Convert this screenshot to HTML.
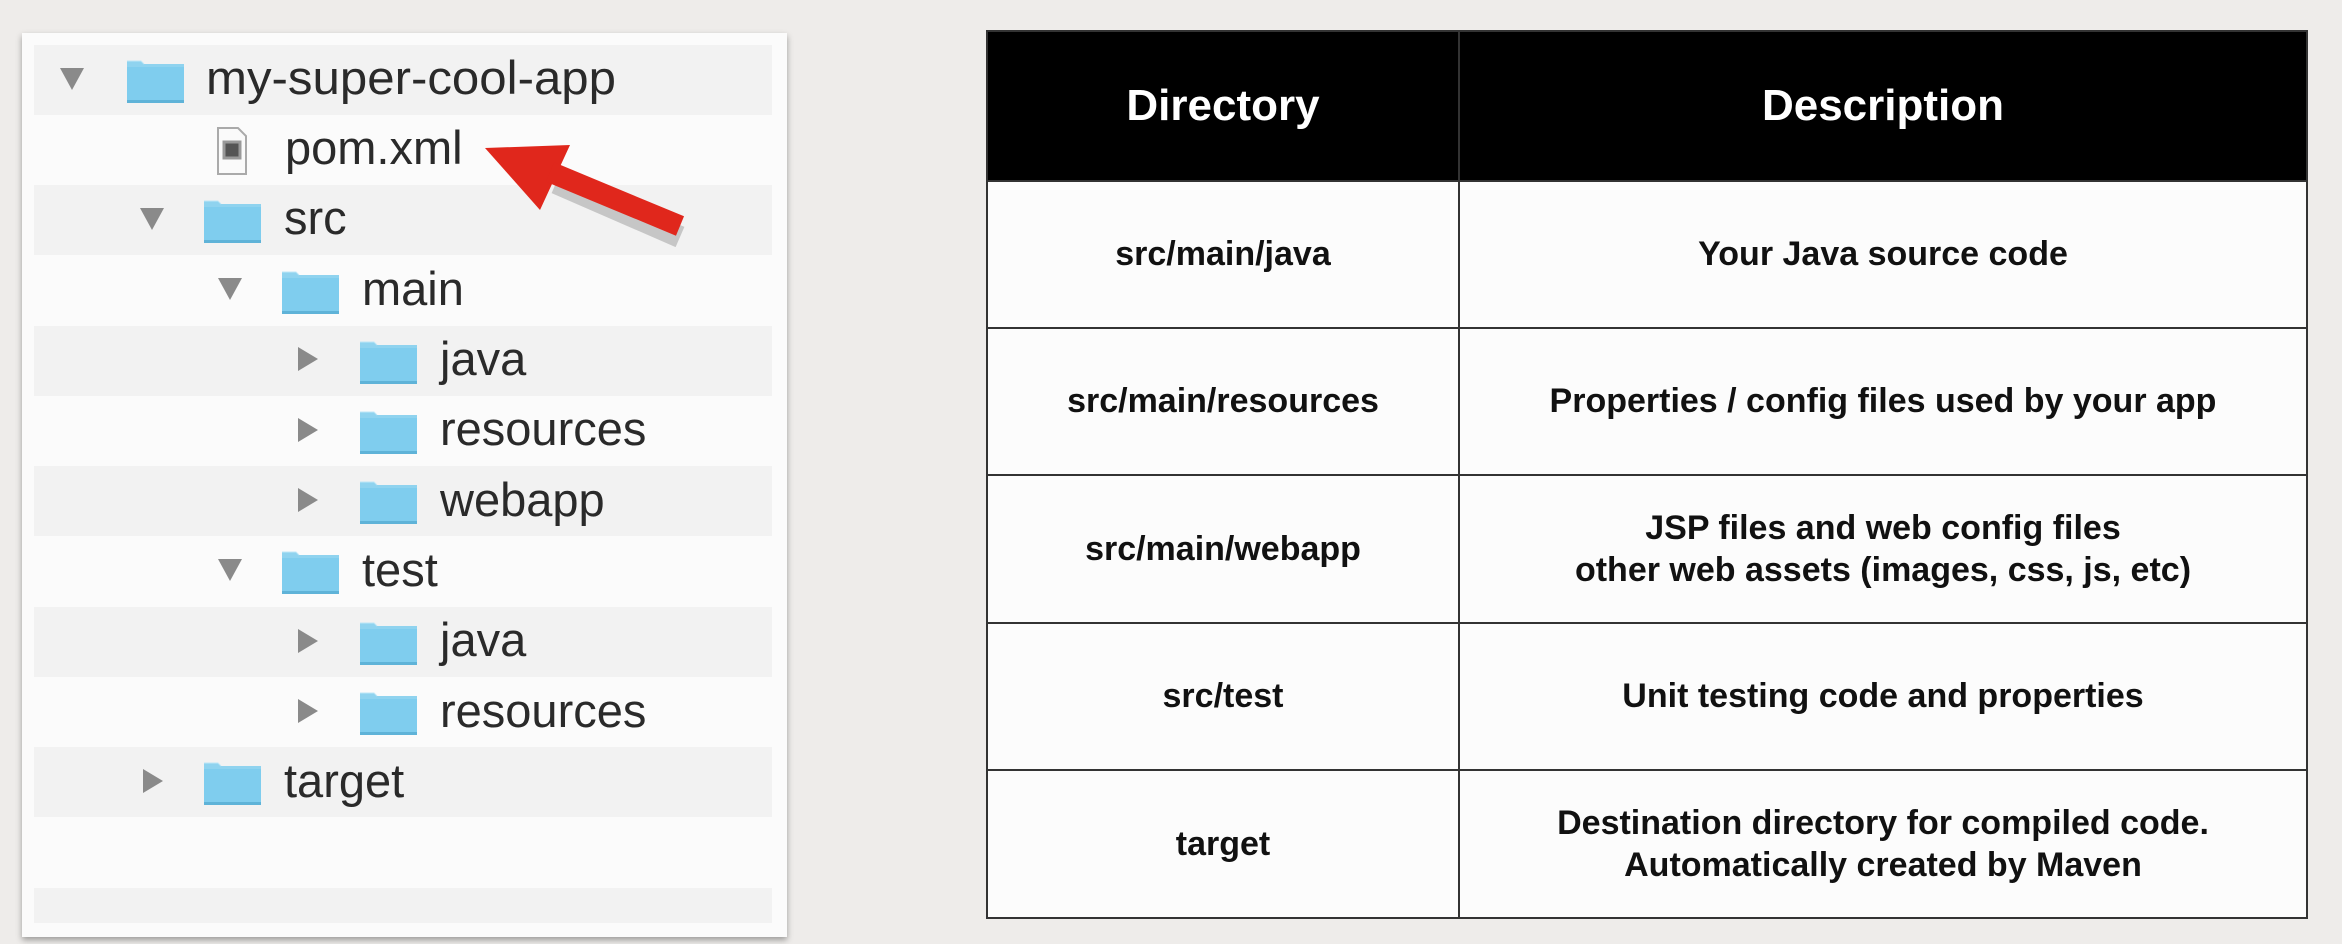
<!DOCTYPE html>
<html><head><meta charset="utf-8"><style>
body{margin:0;width:2342px;height:944px;background:#eeecea;position:relative;overflow:hidden;font-family:"Liberation Sans",sans-serif}
.panel{position:absolute;left:22px;top:33px;width:765px;height:904px;background:#fbfbfb;box-shadow:0 3px 6px rgba(0,0,0,.35)}
.stripe{position:absolute;left:12px;width:738px;height:70px;background:#f2f2f2}
table{position:absolute;left:986px;top:30px;width:1322px;height:889px;border-collapse:collapse;background:#fcfcfc;table-layout:fixed}
td,th{border:2px solid #333;text-align:center;font-weight:bold;font-size:34px;color:#111;line-height:1.25;padding:0}
th{background:#000;color:#fff;font-size:44px;height:146px}
td{height:144px}
</style></head><body>
<div class="panel">
<div class="stripe" style="top:12px"></div>
<div class="stripe" style="top:152px"></div>
<div class="stripe" style="top:293px"></div>
<div class="stripe" style="top:433px"></div>
<div class="stripe" style="top:574px"></div>
<div class="stripe" style="top:714px"></div>
<div class="stripe" style="top:855px;height:35px"></div>
</div>
<svg width="2342" height="944" style="position:absolute;left:0;top:0">
<defs>
<g id="f"><path d="M0 6 h14 l3 3 h40 v38 h-57z" fill="#8fd3ef"/><rect x="0" y="12" width="57" height="36" fill="#7fcdee"/><rect x="0" y="45" width="57" height="3" fill="#5fb3d8"/><path d="M0 6 h14 l3 3" stroke="#bfe7f7" fill="none"/></g>
<path id="d" d="M0 0 h24 l-12 22z" fill="#8a8a8a"/>
<path id="r" d="M0 0 v24 l20 -12z" fill="#8a8a8a"/>
</defs>
<use href="#d" x="60" y="68"/><use href="#f" x="127" y="55"/>
<g transform="translate(218,128)"><path d="M0 0 h20 l8 8 v38 h-28z" fill="#fafafa" stroke="#aaa" stroke-width="2"/><rect x="6" y="14" width="16" height="16" fill="#555" stroke="#999" stroke-width="3"/></g>
<use href="#d" x="140" y="208"/><use href="#f" x="204" y="195"/>
<use href="#d" x="218" y="278"/><use href="#f" x="282" y="266"/>
<use href="#r" x="298" y="347"/><use href="#f" x="360" y="336"/>
<use href="#r" x="298" y="418"/><use href="#f" x="360" y="406"/>
<use href="#r" x="298" y="488"/><use href="#f" x="360" y="476"/>
<use href="#d" x="218" y="559"/><use href="#f" x="282" y="546"/>
<use href="#r" x="298" y="629"/><use href="#f" x="360" y="617"/>
<use href="#r" x="298" y="699"/><use href="#f" x="360" y="687"/>
<use href="#r" x="143" y="769"/><use href="#f" x="204" y="757"/>
<g font-family="Liberation Sans" font-size="47" fill="#2a2a2a">
<text x="206" y="94" textLength="410" lengthAdjust="spacingAndGlyphs">my-super-cool-app</text>
<text x="285" y="164">pom.xml</text>
<text x="284" y="234">src</text>
<text x="362" y="305">main</text>
<text x="440" y="375">java</text>
<text x="440" y="445">resources</text>
<text x="440" y="516">webapp</text>
<text x="362" y="586">test</text>
<text x="440" y="656">java</text>
<text x="440" y="727">resources</text>
<text x="284" y="797">target</text>
</g>
<path d="M553 178 L677 232" stroke="rgba(0,0,0,.18)" stroke-width="22" transform="translate(3,5)"/>
<path d="M485 148 L570 145 L540 210 Z" fill="#e0271c"/>
<path d="M550 172 L680 226" stroke="#e0271c" stroke-width="21"/>
</svg>
<table>
<tr><th style="width:470px">Directory</th><th>Description</th></tr>
<tr><td>src/main/java</td><td>Your Java source code</td></tr>
<tr><td>src/main/resources</td><td>Properties / config files used by your app</td></tr>
<tr><td>src/main/webapp</td><td>JSP files and web config files<br>other web assets (images, css, js, etc)</td></tr>
<tr><td>src/test</td><td>Unit testing code and properties</td></tr>
<tr><td>target</td><td>Destination directory for compiled code.<br>Automatically created by Maven</td></tr>
</table>
</body></html>
